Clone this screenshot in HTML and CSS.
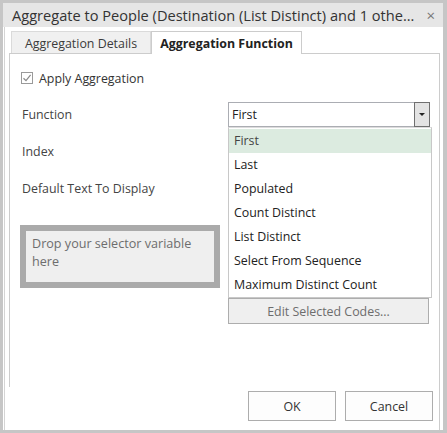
FILE: index.html
```html
<!DOCTYPE html>
<html>
<head>
<meta charset="utf-8">
<link rel="stylesheet" href="styles.css">
</head>
<body>
<div class="window">
  <div class="titlebar">
    <span class="title">Aggregate to People (Destination (List Distinct) and 1 othe...</span>
    <span class="close">×</span>
  </div>
  <div class="content">
    <div class="tabs">
      <div class="tab">Aggregation Details</div>
      <div class="tab active">Aggregation Function</div>
    </div>
    <div class="panel">
      <label class="check-row">
        <span class="checkbox">
          <svg width="10" height="10" viewBox="0 0 10 10"><path d="M1.5 5.2 L4 7.6 L8.6 1.8" fill="none" stroke="#8a8a8a" stroke-width="1.2"/></svg>
        </span>
        <span>Apply Aggregation</span>
      </label>
      <div class="form">
        <div class="col-left">
          <div class="label">Function</div>
          <div class="label">Index</div>
          <div class="label">Default Text To Display</div>
          <div class="dropzone">Drop your selector variable here</div>
        </div>
        <div class="col-right">
          <div class="select-wrap">
            <div class="select">
              <span>First</span>
              <span class="select-btn"><span class="tri"></span></span>
            </div>
            <ul class="list">
              <li class="selected">First</li>
              <li>Last</li>
              <li>Populated</li>
              <li>Count Distinct</li>
              <li>List Distinct</li>
              <li>Select From Sequence</li>
              <li>Maximum Distinct Count</li>
            </ul>
          </div>
          <div class="edit-btn">Edit Selected Codes...</div>
        </div>
      </div>
      <div class="footer">
        <div class="btn">OK</div>
        <div class="btn">Cancel</div>
      </div>
    </div>
  </div>
</div>
</body>
</html>
```
FILE: styles.css
```css
* { box-sizing: border-box; }
html, body { margin: 0; padding: 0; }
body {
  font-family: "Open Sans", "Noto Sans", sans-serif;
  font-size: 12.4px;
  color: #3b3b3b;
  background: #c6c6c6;
}
.window {
  width: 447px;
  height: 433px;
  border: 3px solid #c6c6c6;
  border-right-width: 4px;
  background: #ffffff;
  display: flex;
  flex-direction: column;
  overflow: hidden;
}
.titlebar {
  height: 24px;
  flex: none;
  background: #e6e6e6;
  display: flex;
  align-items: center;
  padding-left: 9px;
  padding-right: 8px;
}
.title {
  font-size: 14.6px;
  color: #333333;
  white-space: nowrap;
  flex: 1;
}
.close {
  font-size: 15px;
  color: #777777;
  line-height: 1;
}
.content {
  flex: 1;
  display: flex;
  flex-direction: column;
  padding-top: 4px;
  padding-left: 4px;
  border-left: 1px solid #d4d4d4;
  margin-left: 1px;
}
.tabs {
  display: flex;
  height: 22px;
  padding-left: 2px;
  flex: none;
}
.tab {
  width: 140px;
  height: 22px;
  background: #f0f0f0;
  border: 1px solid #dadada;
  border-bottom: none;
  display: flex;
  align-items: center;
  justify-content: center;
  color: #3b3b3b;
  padding-top: 1px;
}
.tab.active {
  width: 151px;
  height: 23px;
  background: #ffffff;
  border-color: #cccccc;
  font-weight: bold;
  color: #222222;
  position: relative;
  z-index: 1;
}
.panel {
  flex: 1;
  position: relative;
  border-top: 1px solid #cccccc;
  border-right: 1px solid #cccccc;
  width: 431px;
  padding-left: 1px;
}
.panel::before {
  content: "";
  position: absolute;
  left: 0;
  top: 0;
  width: 1px;
  height: 333px;
  background: #cccccc;
}
.check-row {
  display: flex;
  align-items: center;
  height: 18px;
  margin-top: 15px;
  padding-left: 11px;
  gap: 6px;
  color: #333333;
}
.checkbox {
  width: 12px;
  height: 12px;
  border: 1px solid #9a9a9a;
  display: flex;
  align-items: center;
  justify-content: center;
  background: #ffffff;
}
.form {
  display: flex;
  gap: 8px;
  margin-top: 15px;
  padding-left: 10px;
}
.col-left {
  width: 200px;
  display: flex;
  flex-direction: column;
  gap: 12px;
}
.label {
  height: 25px;
  line-height: 25px;
  padding-left: 2px;
  color: #444444;
}
.dropzone {
  margin-top: 12px;
  height: 63px;
  border: 6px solid #aaaaaa;
  background: #efefef;
  color: #6d6d6d;
  padding: 4px 6px 0;
  line-height: 18px;
  font-size: 12.6px;
}
.col-right {
  width: 202px;
  display: flex;
  flex-direction: column;
}
.select-wrap {
  position: relative;
}
.select {
  height: 25px;
  border: 1px solid #abadb3;
  display: flex;
  align-items: center;
  justify-content: space-between;
  padding-left: 3px;
  color: #222222;
  background: #ffffff;
}
.select-btn {
  width: 16px;
  height: 25px;
  margin: -1px -1px -1px 0;
  border: 1px solid #6f6f6f;
  background: #e3e3e3;
  display: flex;
  align-items: center;
  justify-content: center;
}
.tri {
  width: 0;
  height: 0;
  border-left: 3px solid transparent;
  border-right: 3px solid transparent;
  border-top: 3px solid #222222;
}
.list {
  position: absolute;
  top: 100%;
  left: 0;
  width: 204px;
  margin: 0;
  padding: 1px 0 0;
  list-style: none;
  border: 1px solid #c8c8c8;
  border-top-color: #dcdcdc;
  background: #ffffff;
  z-index: 5;
  height: 171px;
}
.list li {
  height: 24px;
  line-height: 24px;
  padding-left: 5px;
  color: #222222;
}
.list li.selected {
  background: #dcebe0;
  color: #444444;
}
.edit-btn {
  margin-top: 171px;
  height: 26px;
  width: 201px;
  border: 1px solid #adadad;
  background: #efefef;
  color: #6d6d6d;
  display: flex;
  align-items: center;
  justify-content: center;
}
.footer {
  display: flex;
  justify-content: flex-end;
  gap: 9px;
  margin-top: 67px;
  padding-right: 6px;
}
.btn {
  width: 88px;
  height: 30px;
  border: 1px solid #adadad;
  background: #fdfdfd;
  color: #333333;
  display: flex;
  align-items: center;
  justify-content: center;
}
```
